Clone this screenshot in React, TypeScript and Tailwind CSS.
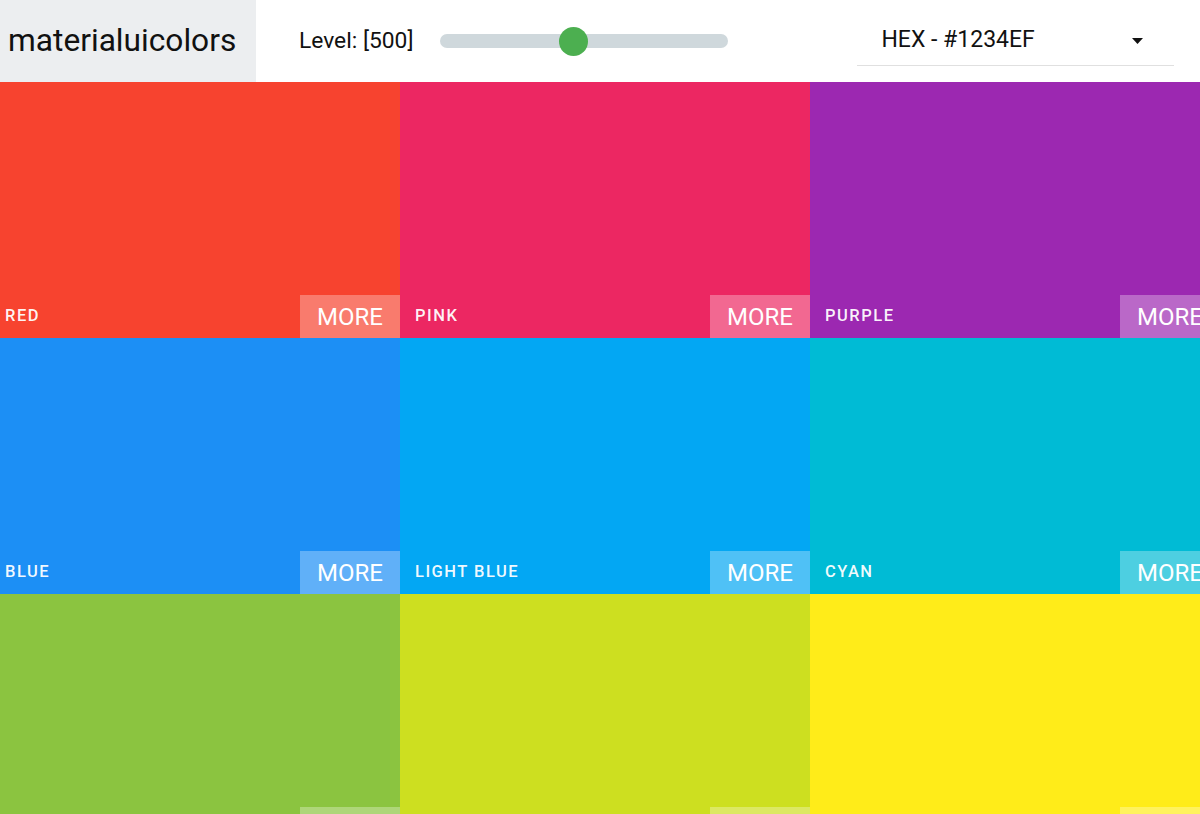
import React from "react";

const tiles = [
  { name: "RED", bg: "bg-[#f7432f]" },
  { name: "PINK", bg: "bg-[#ec2762]" },
  { name: "PURPLE", bg: "bg-[#9c28b1]" },
  { name: "BLUE", bg: "bg-[#1c8ff5]" },
  { name: "LIGHT BLUE", bg: "bg-[#03a7f3]" },
  { name: "CYAN", bg: "bg-[#00bbd5]" },
  { name: "LIGHT GREEN", bg: "bg-[#8bc440]" },
  { name: "LIME", bg: "bg-[#cddf20]" },
  { name: "YELLOW", bg: "bg-[#ffec19]" },
];

export default function App() {
  return (
    <div
      className="w-[1200px] h-[814px] overflow-hidden bg-white"
      style={{ fontFamily: "Roboto, 'Liberation Sans', sans-serif" }}
    >
      <header className="h-[82px] flex items-stretch">
        <div className="w-[256px] bg-[#eceef0] flex items-center pl-[8px] text-[31.7px] text-[#111]">
          materialuicolors
        </div>
        <div className="flex items-center pl-[43px] text-[22.8px] text-[#111]">
          Level: [500]
        </div>
        <div className="flex items-center ml-[27px]">
          <div className="relative w-[288px] h-[14px] rounded-full bg-[#cfd8dc]">
            <div className="absolute left-[119px] top-[-7px] w-[29px] h-[29px] rounded-full bg-[#4caf50]" />
          </div>
        </div>
        <div className="ml-[129px] w-[317px] h-[66px] flex items-center justify-between border-b border-[#e0e0e0] pl-[24px] pr-[31px] self-start">
          <span className="text-[23px] text-[#111] mt-[15px]">HEX - #1234EF</span>
          <svg width="11" height="6" viewBox="0 0 11 6" className="mt-[17px]">
            <path d="M0 0 L11 0 L5.5 6 Z" fill="#111" />
          </svg>
        </div>
      </header>
      <div className="ml-[-10px] grid grid-cols-[410px_410px_410px] auto-rows-[256px]">
        {tiles.map((t) => (
          <div key={t.name} className={`${t.bg} flex flex-col justify-end`}>
            <div className="h-[43px] flex items-center justify-between">
              <span className="pl-[15px] text-[16.5px] font-medium tracking-[1.5px] text-white/95">
                {t.name}
              </span>
              <div className="w-[100px] h-full bg-white/30 flex items-center justify-center text-[24px] text-white">
                MORE
              </div>
            </div>
          </div>
        ))}
      </div>
    </div>
  );
}
